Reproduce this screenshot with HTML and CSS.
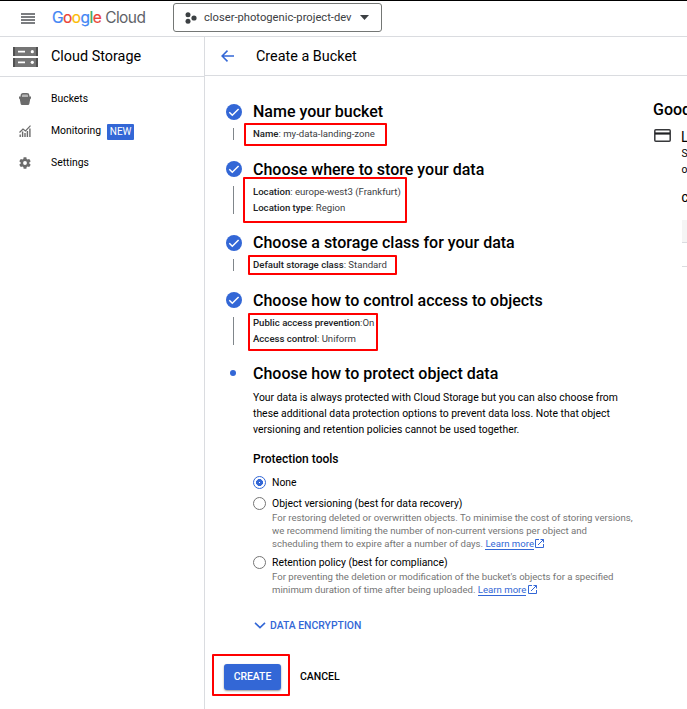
FILE: index.html
```html
<!DOCTYPE html>
<html lang="en">
<head>
<meta charset="utf-8">
<title>Create a Bucket</title>
<link rel="stylesheet" href="styles.css">
</head>
<body>
<div class="page">
  <header class="topbar">
    <svg class="menu" width="14" height="11" viewBox="0 0 14 11"><path d="M0 1h14M0 4h14M0 7h14M0 10h14" stroke="#505357" stroke-width="1.300"/></svg>
    <div class="logo"><span class="google"><span class="b">G</span><span class="r">o</span><span class="y">o</span><span class="b">g</span><span class="g">l</span><span class="r">e</span></span><span class="cloud">Cloud</span></div>
    <div class="project">
      <svg width="12" height="12" viewBox="0 0 12 12" fill="#3c4043"><circle cx="3" cy="2.700" r="2.500"/><circle cx="3" cy="9.300" r="2.500"/><circle cx="9" cy="6" r="2.600"/></svg>
      <span class="project-name">closer-photogenic-project-dev</span>
      <svg class="caret" width="9" height="5" viewBox="0 0 9 5"><path d="M0 0h9L4.500 5z" fill="#3c4043"/></svg>
    </div>
  </header>
  <div class="body">
    <nav class="sidebar">
      <div class="product">
        <svg width="25" height="20" viewBox="0 0 25 20"><path fill="#757575" d="M0 0h25v9H0zM0 11h25v9H0z"/><path fill="#505050" d="M0 0h2v9H0zM23 0h2v9h-2zM0 11h2v9H0zM23 11h2v9h-2z"/><path stroke="#fff" stroke-width="1.800" d="M5 4.700h7M5 15.300h7"/><circle cx="19.300" cy="4.700" r="1.600" fill="#fff"/><circle cx="19.300" cy="15.300" r="1.600" fill="#fff"/></svg>
        <span>Cloud Storage</span>
      </div>
      <ul class="nav">
        <li><svg width="12" height="12" viewBox="0 0 12 12"><path d="M0 3.500h12v2.300h-.7l-1 5.200q-.2 1-1.300 1H3q-1.100 0-1.300-1l-1-5.200H0z" fill="#6b6b6b"/><path d="M2.300 4V2.300Q2.300.8 4 .8h4q1.700 0 1.700 1.500V4" fill="#b5b5b5" stroke="#6b6b6b" stroke-width="1.400"/></svg><span class="lbl">Buckets</span></li>
        <li><svg width="12" height="12" viewBox="0 0 12 12" fill="none" stroke="#6b6b6b"><path d="M.5 7.500 4 4l2.500 2L11.500.7" stroke-width="1.200"/><path d="M1.200 12V9.500M3.600 12V6.500M6 12V8M8.400 12V6M10.900 12V3.500" stroke-width="1.400"/></svg><span class="lbl">Monitoring</span><span class="badge">NEW</span></li>
        <li><svg width="12" height="12" viewBox="2 2 20 20"><path fill="#6b6b6b" d="M19.140 12.940c.04-.3.060-.61.060-.94 0-.32-.02-.64-.07-.94l2.030-1.580c.18-.14.230-.41.120-.61l-1.920-3.320c-.12-.22-.37-.29-.59-.22l-2.390.96c-.5-.38-1.030-.7-1.620-.94L14.400 2.810c-.04-.24-.24-.41-.48-.41h-3.840c-.24 0-.43.170-.47.410L9.250 5.350C8.660 5.590 8.120 5.920 7.630 6.290L5.240 5.330c-.22-.08-.47 0-.59.220L2.740 8.870c-.12.210-.08.470.12.610l2.030 1.580C4.840 11.360 4.800 11.690 4.800 12s.02.640.07.940l-2.030 1.580c-.18.140-.23.410-.12.610l1.920 3.320c.12.220.37.290.59.220l2.390-.96c.5.380 1.030.7 1.620.94l.36 2.540c.05.240.24.410.48.410h3.840c.24 0 .44-.17.470-.41l.36-2.540c.59-.24 1.130-.56 1.620-.94l2.390.96c.22.080.47 0 .59-.22l1.920-3.320c.12-.22.070-.47-.12-.61L19.140 12.940zM12 15.200a3.200 3.200 0 1 1 0-6.400 3.200 3.200 0 0 1 0 6.400z"/></svg><span class="lbl">Settings</span></li>
      </ul>
    </nav>
    <main class="main">
      <div class="titlebar">
        <svg width="13" height="12" viewBox="0 0 13 12" fill="none" stroke="#3367d6" stroke-width="1.500"><path d="M13 6H1.200M6.500.6 1.100 6l5.400 5.400"/></svg>
        <h1>Create a Bucket</h1>
      </div>
      <div class="content">
        <div class="form">
          <section class="step">
            <svg class="tick" width="16" height="16" viewBox="0 0 16 16"><circle cx="8" cy="8" r="8" fill="#3367d6"/><path d="M3.300 8.300 6.300 11.300 12.600 5" fill="none" stroke="#fff" stroke-width="1.500"/></svg>
            <h2>Name your bucket</h2>
            <i class="rail"></i>
            <div class="facts"><p><b>Name</b>: my-data-landing-zone</p></div>
          </section>
          <section class="step">
            <svg class="tick" width="16" height="16" viewBox="0 0 16 16"><circle cx="8" cy="8" r="8" fill="#3367d6"/><path d="M3.300 8.300 6.300 11.300 12.600 5" fill="none" stroke="#fff" stroke-width="1.500"/></svg>
            <h2>Choose where to store your data</h2>
            <i class="rail"></i>
            <div class="facts"><p><b>Location</b>: europe-west3 (Frankfurt)</p><p><b>Location type</b>: Region</p></div>
          </section>
          <section class="step">
            <svg class="tick" width="16" height="16" viewBox="0 0 16 16"><circle cx="8" cy="8" r="8" fill="#3367d6"/><path d="M3.300 8.300 6.300 11.300 12.600 5" fill="none" stroke="#fff" stroke-width="1.500"/></svg>
            <h2>Choose a storage class for your data</h2>
            <i class="rail"></i>
            <div class="facts"><p><b>Default storage class</b>: Standard</p></div>
          </section>
          <section class="step">
            <svg class="tick" width="16" height="16" viewBox="0 0 16 16"><circle cx="8" cy="8" r="8" fill="#3367d6"/><path d="M3.300 8.300 6.300 11.300 12.600 5" fill="none" stroke="#fff" stroke-width="1.500"/></svg>
            <h2>Choose how to control access to objects</h2>
            <i class="rail"></i>
            <div class="facts"><p><b>Public access prevention</b>:On</p><p><b>Access control</b>: Uniform</p></div>
          </section>
          <section class="step current">
            <i class="dot"></i>
            <h2>Choose how to protect object data</h2>
            <div class="details">
              <p class="intro">Your data is always protected with Cloud Storage but you can also choose from<br>these additional data protection options to prevent data loss. Note that object<br>versioning and retention policies cannot be used together.</p>
              <h3>Protection tools</h3>
              <div class="option">
                <i class="radio on"></i><span class="name">None</span>
              </div>
              <div class="option">
                <i class="radio"></i><span class="name">Object versioning (best for data recovery)</span>
                <p class="hint">For restoring deleted or overwritten objects. To minimise the cost of storing versions,<br>we recommend limiting the number of non-current versions per object and<br>scheduling them to expire after a number of days. <a>Learn more</a><svg width="9" height="9" viewBox="0 0 9 9" fill="none" stroke="#3367d6"><path d="M4 .5H.5v8h8V5M5.500.5h3v3M8.500.5 3 6"/></svg></p>
              </div>
              <div class="option">
                <i class="radio"></i><span class="name">Retention policy (best for compliance)</span>
                <p class="hint">For preventing the deletion or modification of the bucket's objects for a specified<br>minimum duration of time after being uploaded. <a>Learn more</a><svg width="9" height="9" viewBox="0 0 9 9" fill="none" stroke="#3367d6"><path d="M4 .5H.5v8h8V5M5.500.5h3v3M8.500.5 3 6"/></svg></p>
              </div>
              <div class="expander"><svg width="12" height="7" viewBox="0 0 12 7"><path d="M1 .8 6 5.600 11 .8" fill="none" stroke="#3367d6" stroke-width="1.600"/></svg><span>DATA ENCRYPTION</span></div>
            </div>
          </section>
          <div class="actions"><span class="create">CREATE</span><span class="cancel">CANCEL</span></div>
        </div>
        <aside class="info">
          <h2>Good</h2>
          <div class="info-row">
            <svg width="17" height="13" viewBox="0 0 17 13"><rect x=".8" y=".8" width="15.400" height="11.400" rx="1" fill="none" stroke="#37383b" stroke-width="1.500"/><path d="M1 4.500h15" stroke="#202124" stroke-width="2.200"/></svg>
            <div class="info-text">
              <div class="info-title">L</div>
              <p>S<br>o</p>
              <div class="info-sub">C</div>
              <div class="table-head"></div>
              <div class="table-row"></div>
            </div>
          </div>
        </aside>
      </div>
    </main>
  </div>
  <i class="mark mark-name"></i>
  <i class="mark mark-location"></i>
  <i class="mark mark-class"></i>
  <i class="mark mark-access"></i>
  <i class="mark mark-create"></i>
</div>
</body>
</html>
```
FILE: styles.css
```css
* { box-sizing: border-box; margin: 0; padding: 0; }
body { font-family: Roboto, "Liberation Sans", sans-serif; font-size: 10.4px; color: #000; background: #fff; }
svg, i { display: block; flex: none; }
.page { position: relative; width: 687px; height: 709px; overflow: hidden; white-space: nowrap; display: flex; flex-direction: column; }
.topbar { display: flex; align-items: center; height: 37px; flex: none; border-top: 1px solid #000; border-bottom: 1px solid #dadce0; padding-left: 21px; }
.menu { margin-top: -1px; }
.logo { width: 94px; margin-left: 17px; display: flex; gap: 4px; font-family: Inter, sans-serif; font-size: 15.500px; line-height: 18px; letter-spacing: -.56px; margin-top: -2px; }
.google { -webkit-text-stroke: .2px currentColor; }
.cloud { color: #5f6368; font-weight: 400; }
.b { color: #4285f4; } .r { color: #ea4335; } .y { color: #fbbc04; } .g { color: #34a853; }
.project { margin-left: 27px; width: 209px; height: 29px; border: 1px solid #747775; border-radius: 3px; display: flex; align-items: center; padding-left: 11px; color: #3c4043; font-size: 11.200px; margin-top: -2px; }
.project-name { margin-left: 7px; width: 149px; }
.caret { margin-left: 7px; }
.body { flex: 1; display: flex; min-height: 0; }
.sidebar { width: 205px; flex: none; border-right: 1px solid #dadce0; }
.product { height: 40px; border-bottom: 1px solid #dadce0; display: flex; align-items: center; gap: 13px; padding-left: 13px; font-size: 14.400px; }
.product span { margin-top: -1px; }
.nav { list-style: none; padding-top: 6px; }
.nav li { height: 32px; display: flex; align-items: center; padding-left: 19px; }
.lbl { margin-left: 20px; margin-top: -2px; }
.badge { margin-left: 6px; margin-top: 1px; width: 27px; height: 16px; border-radius: 1px; background: #3367d6; color: #fff; font-size: 10px; line-height: 16px; text-align: center; }
.main { flex: 1; min-width: 0; display: flex; flex-direction: column; }
.titlebar { height: 39px; flex: none; border-bottom: 1px solid #dadce0; display: flex; align-items: center; gap: 22px; padding-left: 16px; }
h1 { font-size: 14.400px; font-weight: 400; }
.content { display: flex; flex: 1; }
.form { width: 448px; flex: none; padding: 24px 0 0 20px; }
.step { display: grid; grid-template-columns: 28px 1fr; grid-template-rows: 24px auto; row-gap: 2px; padding-bottom: 15.600px; }
h2 { font-size: 16px; font-weight: 500; line-height: 24px; }
.tick { margin: 3.600px 0 0 1px; }
.rail { width: 1px; background: #80868b; margin: 2px 0 2px 8px; }
.facts { font-size: 9.600px; line-height: 16px; color: #3c4043; }
.facts b { font-weight: 500; color: #202124; }
.current { padding-bottom: 0; }
.dot { width: 6px; height: 6px; border-radius: 50%; background: #3367d6; margin: 8px 0 0 5px; }
.details { grid-column: 2; }
.intro { line-height: 16px; margin-top: 2px; }
h3 { font-size: 12px; font-weight: 500; line-height: 16px; margin: 12.600px 0 8.400px; }
.option { display: grid; grid-template-columns: 19px 1fr; align-items: center; margin-bottom: 4.600px; line-height: 16px; }
.radio { width: 13px; height: 13px; border: 1px solid #757575; border-radius: 50%; margin-top: -1px; }
.radio.on { border-color: #3367d6; background: radial-gradient(circle, #fff 0 .5px, #3367d6 1px 3.200px, #fff 3.700px); }
.hint { grid-column: 2; font-size: 9.600px; line-height: 13px; color: #757575; margin-top: -.8px; }
.hint a { color: #3367d6; border-bottom: 1px solid #3367d6; }
.hint svg { display: inline-block; margin-left: 1.500px; vertical-align: -1px; }
.expander { display: flex; align-items: center; gap: 4px; margin: 21.400px 0 0 1px; height: 16px; color: #3367d6; font-weight: 500; }
.actions { display: flex; align-items: center; margin-top: 31px; font-weight: 500; }
.create { width: 57px; height: 26px; line-height: 25px; text-align: center; color: #fff; background: #3367d6; border-radius: 3px; box-shadow: 0 1px 2px rgba(0,0,0,.4); margin-left: -1px; }
.cancel { margin: -2px 0 0 19px; font-size: 10.500px; }
.info { padding-top: 22px; flex: none; width: 180px; }
.info-row { display: flex; gap: 11px; padding: 7px 0 0 1px; }
.info-title { font-size: 14px; line-height: 18px; margin: -1px 0 0 -1px; }
.info p { line-height: 16px; margin-left: -.5px; }
.info-text { flex: 1; }
.info-sub { font-weight: 500; line-height: 16px; margin: 13px 0 13px -.5px; }
.table-head { height: 23px; background: #f5f5f5; border-bottom: 1px solid #dadce0; }
.table-row { height: 24px; border-bottom: 1px solid #dadce0; }
.mark { position: absolute; border: 2px solid #f00; border-radius: 1px; }
.mark-name { left: 244px; top: 123px; width: 143px; height: 23px; }
.mark-location { left: 243px; top: 177px; width: 164px; height: 46px; }
.mark-class { left: 248px; top: 255px; width: 149px; height: 20px; }
.mark-access { left: 248px; top: 313px; width: 130px; height: 38px; }
.mark-create { left: 212px; top: 654px; width: 78px; height: 42px; }
```
